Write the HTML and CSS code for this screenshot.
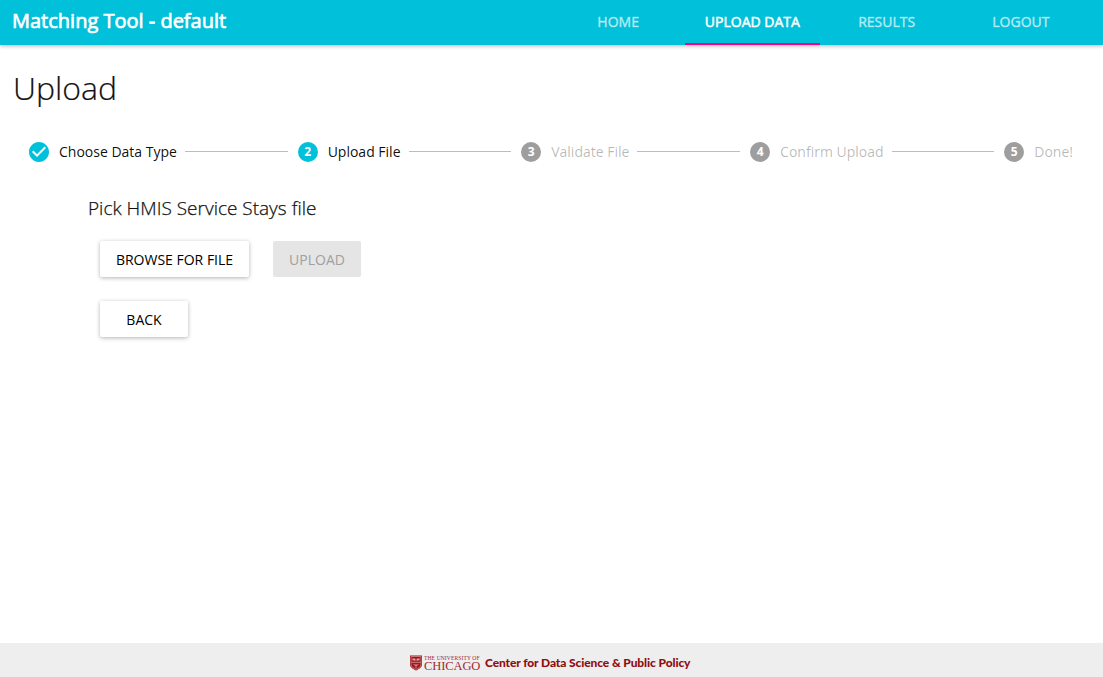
FILE: index.html
```html
<!DOCTYPE html>
<html lang="en">
<head>
<meta charset="utf-8">
<title>Matching Tool</title>
<link rel="stylesheet" href="styles.css">
</head>
<body>
<header class="bar">
  <div class="brand">Matching Tool - default</div>
  <nav class="tabs">
    <a class="tab">HOME</a>
    <a class="tab active">UPLOAD DATA</a>
    <a class="tab">RESULTS</a>
    <a class="tab">LOGOUT</a>
  </nav>
</header>
<main class="page">
  <h1 class="title">Upload</h1>
  <div class="stepper">
    <div class="step on">
      <svg class="check" width="24" height="24" viewBox="0 0 24 24"><path fill="#00c0da" d="M12 2C6.48 2 2 6.48 2 12s4.480 10 10 10 10-4.480 10-10S17.520 2 12 2zm-2 15l-5-5 1.410-1.410L10 14.170l7.590-7.590L19 8l-9 9z"/></svg>
      <span class="label">Choose Data Type</span>
    </div>
    <div class="line"></div>
    <div class="step on"><span class="dot">2</span><span class="label">Upload File</span></div>
    <div class="line"></div>
    <div class="step"><span class="dot">3</span><span class="label">Validate File</span></div>
    <div class="line"></div>
    <div class="step"><span class="dot">4</span><span class="label">Confirm Upload</span></div>
    <div class="line"></div>
    <div class="step"><span class="dot">5</span><span class="label">Done!</span></div>
  </div>
  <section class="content">
    <h2 class="prompt">Pick HMIS Service Stays file</h2>
    <div class="row">
      <button class="btn browse">BROWSE FOR FILE</button>
      <button class="btn disabled" disabled>UPLOAD</button>
    </div>
    <div class="row">
      <button class="btn">BACK</button>
    </div>
  </section>
</main>
<footer class="footer">
  <svg class="shield" width="12" height="16" viewBox="0 0 12 16">
    <path fill="#a0141c" d="M0 .5h12v9c0 3-3 4.500-6 6-3-1.500-6-3-6-6z"/>
    <path fill="none" stroke="#e9cfd0" stroke-width=".5" d="M1 1.500h10v8c0 2.500-2.500 3.700-5 4.900-2.500-1.200-5-2.400-5-4.900z"/>
    <path fill="#d9a5a7" d="M2.500 3.200l3 .5v2l-3-.5zM9.500 3.200l-3 .5v2l3-.5z"/>
    <path fill="none" stroke="#d9a5a7" stroke-width=".8" d="M1.500 7.300h9M6 9v4M3.500 9.500l2.500 1 2.500-1"/>
  </svg>
  <div class="uni"><span class="uni-top">THE UNIVERSITY OF</span><span class="uni-name">CHICAGO</span></div>
  <div class="center">Center for Data Science &amp; Public Policy</div>
</footer>
</body>
</html>
```
FILE: styles.css
```css
* { box-sizing: border-box; }
body {
  margin: 0;
  height: 677px;
  display: flex;
  flex-direction: column;
  overflow: hidden;
  background: #fff;
  color: rgba(0, 0, 0, .87);
  font-family: "Open Sans", sans-serif;
}
.bar {
  height: 45px;
  display: flex;
  justify-content: space-between;
  background: #00c0da;
  color: #fff;
  box-shadow: 0 1px 4px rgba(0, 0, 0, .3);
  white-space: nowrap;
}
.brand {
  padding-left: 12px;
  font-size: 20px;
  line-height: 41px;
  -webkit-text-stroke: .7px #fff;
}
.tabs { display: flex; width: 537px; margin-right: 15px; }
.tab {
  flex: 1;
  height: 45px;
  text-align: center;
  font-size: 14px;
  line-height: 43px;
  color: rgba(255, 255, 255, .6);
  -webkit-text-stroke: .6px rgba(255, 255, 255, .45);
}
.tab.active {
  color: #fff;
  border-bottom: 2px solid #ff0080;
  -webkit-text-stroke: .5px #fff;
}
.page { flex: 1; }
.title {
  margin: 0;
  padding: 19px 0 0 13px;
  font-size: 32px;
  line-height: 48px;
  font-weight: 300;
  color: #111;
  -webkit-text-stroke: .2px #111;
}
.stepper {
  display: flex;
  align-items: center;
  height: 24px;
  margin: 28px 22px 0 27px;
  white-space: nowrap;
}
.step { display: flex; align-items: center; color: rgba(0, 0, 0, .28); }
.on { color: rgba(0, 0, 0, .95); }
.label { margin: 0 8px; font-size: 14px; line-height: 24px; }
.dot {
  width: 20px;
  height: 20px;
  margin: 0 2px;
  border-radius: 50%;
  background: #9e9e9e;
  color: #fff;
  font-size: 12px;
  line-height: 20px;
  font-weight: 700;
  text-align: center;
}
.on .dot { background: #00c0da; }
.line { flex: 1; height: 1px; margin: 0 8px 1px 0; background: #bdbdbd; }
.content { padding: 31px 0 0 88px; }
.prompt {
  margin: 0 0 20px;
  font-size: 19px;
  line-height: 26px;
  font-weight: 300;
  color: #111;
  -webkit-text-stroke: .25px #111;
}
.row { display: flex; gap: 24px; margin: 0 0 24px 12px; }
.btn {
  min-width: 88px;
  height: 36px;
  padding: 2px 0 0;
  border: 0;
  border-radius: 2px;
  background: #fff;
  color: #000;
  font: 400 14px/34px "Open Sans", sans-serif;
  box-shadow: 0 1px 4px rgba(0, 0, 0, .3);
}
.browse { width: 149px; }
.disabled { background: #e5e5e5; color: #a0a0a0; box-shadow: none; }
.footer {
  height: 34px;
  display: flex;
  align-items: center;
  padding: 6px 0 0 410px;
  background: #eee;
  color: #900d12;
  white-space: nowrap;
}
.uni {
  width: 57px;
  margin: 0 4px 0 2px;
  display: flex;
  flex-direction: column;
  font-family: "Liberation Serif", serif;
  color: #a02a30;
}
.uni-top { font-size: 5.500px; line-height: 6px; letter-spacing: .14px; }
.uni-name { font-size: 12.500px; line-height: 11px; letter-spacing: -.1px; }
.center { font: 900 12px/16px Lato, sans-serif; letter-spacing: -.11px; }
```
